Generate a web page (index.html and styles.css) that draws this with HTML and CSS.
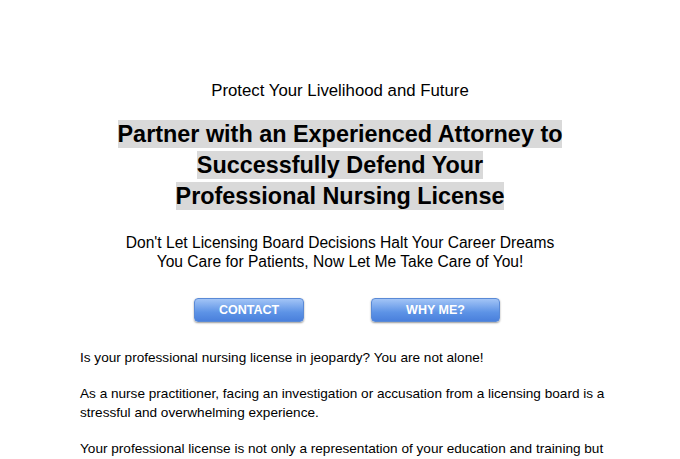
FILE: index.html
```html
<!DOCTYPE html>
<html>
<head>
<meta charset="utf-8">
<link rel="stylesheet" href="styles.css">
</head>
<body>
<main class="page">
  <p class="kicker">Protect Your Livelihood and Future</p>
  <h1 class="headline"><span class="hl">Partner with an Experienced Attorney to</span><br><span class="hl">Successfully Defend Your</span><br><span class="hl">Professional Nursing License</span></h1>
  <p class="sub">Don't Let Licensing Board Decisions Halt Your Career Dreams<br>You Care for Patients, Now Let Me Take Care of You!</p>
  <div class="actions">
    <a class="btn btn-contact" href="#">CONTACT</a>
    <a class="btn btn-why" href="#">WHY ME?</a>
  </div>
  <section class="body">
    <p>Is your professional nursing license in jeopardy? You are not alone!</p>
    <p>As a nurse practitioner, facing an investigation or accusation from a licensing board is a stressful and overwhelming experience.</p>
    <p>Your professional license is not only a representation of your education and training but also a reflection of your commitment to your patients.</p>
  </section>
</main>
</body>
</html>
```
FILE: styles.css
```css
html, body {
  margin: 0;
  padding: 0;
  background: #ffffff;
  overflow: hidden;
}
body {
  font-family: "Liberation Sans", Arial, sans-serif;
  color: #000;
}
.page {
  width: 520px;
  margin: 0 auto;
  padding-top: 80px;
}
.kicker {
  margin: 0;
  text-align: center;
  font-size: 16.8px;
  line-height: 22px;
}
.headline {
  margin: 17px 0 0;
  text-align: center;
  font-size: 23.4px;
  line-height: 31px;
  font-weight: bold;
}
.hl {
  background: #d9d9d9;
  padding: 1px 0;
}
.sub {
  margin: 21px 0 0;
  text-align: center;
  font-size: 15.6px;
  line-height: 19px;
}
.actions {
  display: flex;
  justify-content: center;
  gap: 67px;
  margin-top: 27px;
  padding-left: 14px;
}
.btn {
  display: flex;
  align-items: center;
  justify-content: center;
  box-sizing: border-box;
  height: 24px;
  border-radius: 4px;
  border: 1px solid #5a8ad6;
  background: linear-gradient(#a2c4f6, #5d93e6 60%, #4a80dc);
  box-shadow: 0 1px 2px rgba(0,0,0,0.4);
  color: #fff;
  font-weight: bold;
  font-size: 12.5px;
  text-decoration: none;
}
.btn-contact { width: 110px; }
.btn-why { width: 129px; }
.body {
  margin-top: 26px;
  margin-right: -12px;
  font-size: 13.6px;
  line-height: 19px;
}
.body p {
  margin: 0 0 17px;
}
```
